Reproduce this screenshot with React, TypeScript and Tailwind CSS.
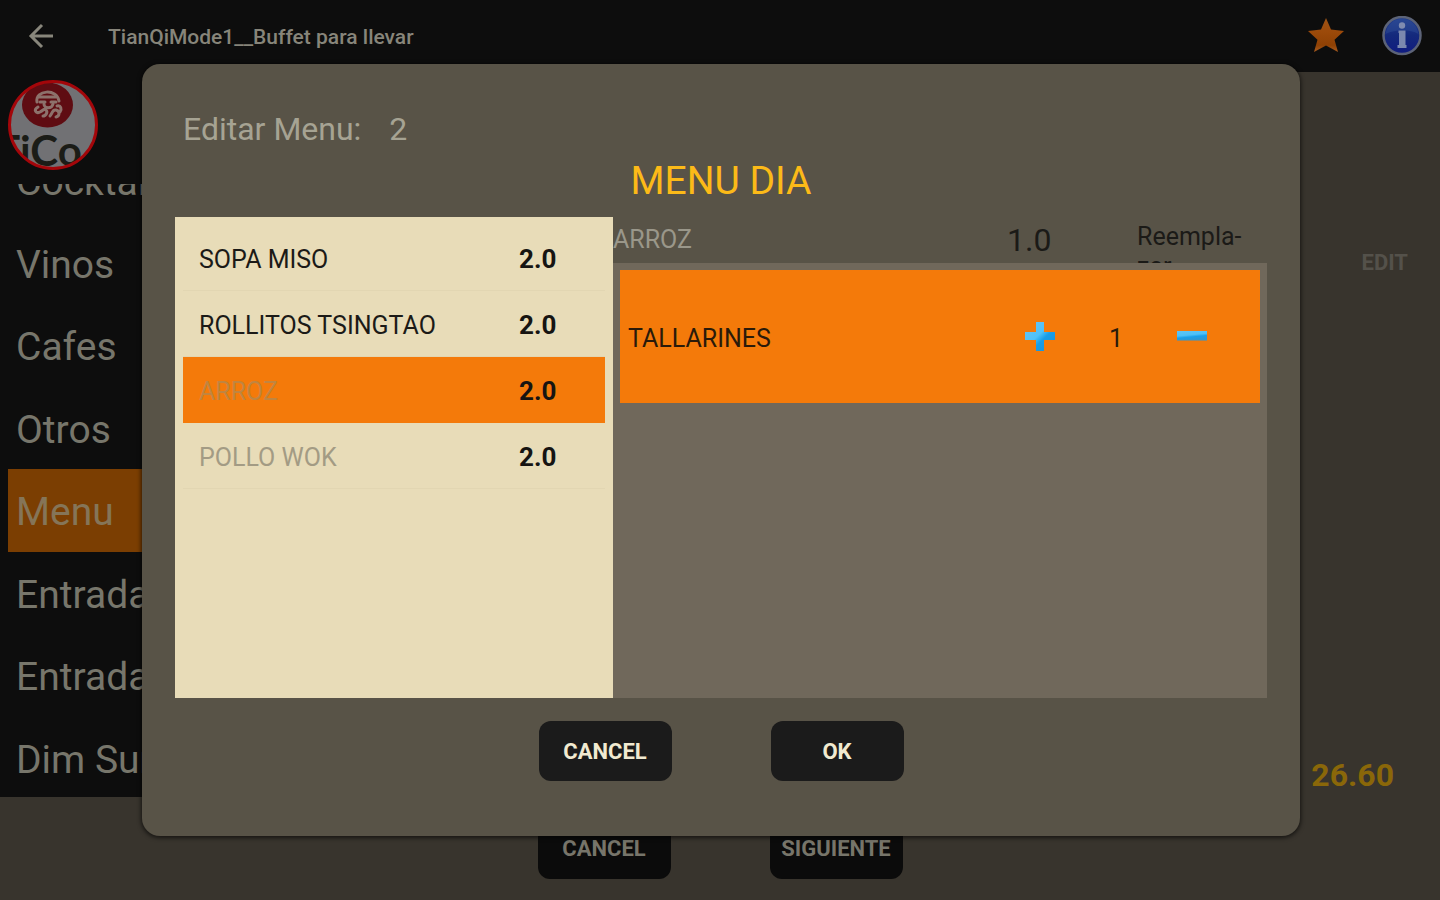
import { useState } from 'react';
import clsx from 'clsx';

type Dish = { name: string; qty: string; disabled?: boolean };

const CATEGORIES = ['Cocktails', 'Vinos', 'Cafes', 'Otros', 'Menu', 'Entradas', 'Entradas', 'Dim Sum'];

const DISHES: Dish[] = [
  { name: 'SOPA MISO', qty: '2.0' },
  { name: 'ROLLITOS TSINGTAO', qty: '2.0' },
  { name: 'ARROZ', qty: '2.0', disabled: true },
  { name: 'POLLO WOK', qty: '2.0', disabled: true },
];

function BackArrow() {
  return (
    <svg width="26" height="26" viewBox="0 0 26 26" fill="none" stroke="#88867b" strokeWidth="3">
      <path d="M25 13H3M14 2 3 13l11 11" />
    </svg>
  );
}

function StarIcon() {
  return (
    <svg width="38" height="38" viewBox="0 0 38 38">
      <defs>
        <linearGradient id="star" x1="0" y1="0" x2="0" y2="1">
          <stop offset="0" stopColor="#9c5316" />
          <stop offset="0.4" stopColor="#9c4a0a" />
          <stop offset="0.8" stopColor="#8f4104" />
          <stop offset="1" stopColor="#a85c20" />
        </linearGradient>
      </defs>
      <path d="M18 1l5 11.500L36 14l-9.500 8.800L30 35l-12-6.500L6 35l3.500-12.200L0 14l13-1.500z" fill="url(#star)" />
    </svg>
  );
}

function InfoIcon() {
  return (
    <svg width="40" height="40" viewBox="0 0 40 40">
      <defs>
        <linearGradient id="info" x1="0" y1="0" x2="0" y2="1">
          <stop offset="0" stopColor="#24418f" />
          <stop offset="0.5" stopColor="#14297c" />
          <stop offset="1" stopColor="#101b80" />
        </linearGradient>
      </defs>
      <circle cx="20" cy="19.500" r="18.500" fill="url(#info)" stroke="#5c6377" strokeWidth="2.500" />
      <path d="M3.500 18C5 9 11 3 20 3s15 6 16.500 15c-9-5-22-5-33 0z" fill="#35549c" opacity="0.4" />
      <circle cx="20" cy="9.500" r="3.200" fill="#7f8cb0" />
      <path d="M16.500 14.500h7V29h1v3h-9v-3H17V17h-.5z" fill="#7b88ae" />
    </svg>
  );
}

function BrandLogo() {
  return (
    <svg width="90" height="90" viewBox="0 0 90 90">
      <defs>
        <clipPath id="brand">
          <circle cx="45" cy="45" r="43" />
        </clipPath>
      </defs>
      <g clipPath="url(#brand)">
        <rect width="90" height="90" fill="#717174" />
        <ellipse cx="39.500" cy="25" rx="25.500" ry="22.500" fill="#5f0c12" />
        <g fill="none" stroke="#8d716b" strokeWidth="3" strokeLinecap="round">
          <path d="M29 22c-2-12 20-14 22-1" />
          <path d="M31 17h17M32 22h5M43 22h5" />
          <path d="M36 24c0 5 8 5 9 0" />
          <path d="M30 27c-5 3-2 7 2 5s4-4 6-2 0 6-3 6" />
          <path d="M42 36c3-3 2-7 6-6s4 6 0 7M49 26c4-1 5 3 3 6" />
        </g>
        <text x="-13" y="86" fontFamily="Lato, sans-serif" fontSize="42" fontWeight="700" fill="#1b1c17">TiCo</text>
      </g>
      <circle cx="45" cy="45" r="43.500" fill="none" stroke="#a3060a" strokeWidth="3" />
    </svg>
  );
}

function PlusIcon() {
  return (
    <svg width="30" height="30" viewBox="0 0 30 30">
      <defs>
        <linearGradient id="plus" x1="0" y1="0" x2="1" y2="1">
          <stop offset="0.150" stopColor="#63c3f5" />
          <stop offset="0.450" stopColor="#4fc2f8" />
          <stop offset="0.600" stopColor="#189ee8" />
          <stop offset="1" stopColor="#1d8fd2" />
        </linearGradient>
      </defs>
      <path d="M11 0h8v10h11v8H19v11h-8V18H0v-8h11z" fill="url(#plus)" />
    </svg>
  );
}

function MinusIcon() {
  return (
    <svg width="30" height="30" viewBox="0 0 30 30">
      <defs>
        <linearGradient id="minus" x1="0" y1="0" x2="0.300" y2="1">
          <stop offset="0.100" stopColor="#5bc4f5" />
          <stop offset="0.500" stopColor="#4cc0f7" />
          <stop offset="0.700" stopColor="#1a9fe8" />
          <stop offset="1" stopColor="#2f97d0" />
        </linearGradient>
      </defs>
      <path d="M0 9h30v9.500H0z" fill="url(#minus)" />
    </svg>
  );
}

function DialogButton({ label, dimmed }: { label: string; dimmed?: boolean }) {
  return (
    <button
      className={clsx(
        'h-[60px] w-[133px] rounded-xl text-[22px] font-bold',
        dimmed ? 'bg-[#0b0b0b] text-[#77756a]' : 'bg-[#1b1b1b] text-[#f1ead0]',
      )}
    >
      {label}
    </button>
  );
}

function Sidebar() {
  return (
    <nav className="flex w-[300px] flex-col bg-[#0d0d0d] pt-2 pl-2">
      <BrandLogo />
      <div className="mt-[14px] flex min-h-0 flex-1 flex-col justify-end overflow-hidden">
        <div className="-mb-0.5 grid h-[660px] shrink-0 grid-rows-8">
          {CATEGORIES.map((name, i) => (
            <button
              key={i}
              className={clsx(
                'px-2 pt-1 text-left text-[39px]',
                name === 'Menu' ? 'bg-[#7b3e02] text-[#857558]' : 'text-[#77766b]',
              )}
            >
              {name}
            </button>
          ))}
        </div>
      </div>
    </nav>
  );
}

function DishList({ selected, onSelect }: { selected: string; onSelect: (name: string) => void }) {
  return (
    <div className="w-[438px] shrink-0 bg-[#e8dcb8] p-2">
      {DISHES.map((dish) => (
        <button
          key={dish.name}
          onClick={() => onSelect(dish.name)}
          className={clsx(
            'flex h-[66px] w-full items-center border-b px-4 pt-1 text-left text-[25px]',
            dish.name === selected ? 'border-[#f47a0a] bg-[#f47a0a]' : 'border-[#e2d6b2]',
          )}
        >
          <span
            className={clsx(
              'flex-1',
              !dish.disabled && 'text-[#1b1a17]',
              dish.disabled && (dish.name === selected ? 'text-[#c08540]' : 'text-[#a39b84]'),
            )}
          >
            {dish.name}
          </span>
          <span className="w-[70px] text-[26px] font-bold text-[#161412]">{dish.qty}</span>
        </button>
      ))}
    </div>
  );
}

function ReplacementPanel({ dish }: { dish: string }) {
  const [count, setCount] = useState(1);

  return (
    <div className="flex flex-1 flex-col">
      <div className="flex h-[46px] overflow-hidden">
        <span className="flex-1 text-[25px] leading-[46px] text-[#9a978a]">{dish}</span>
        <span className="w-[130px] text-[32px] leading-[46px] text-[#1b1a17]">1.0</span>
        <span className="w-[130px] pt-[5px] text-[25px] leading-[30px] text-[#1b1a17]">
          Reempla-
          <br />
          zar
        </span>
      </div>
      <div className="flex-1 bg-[#70685b] p-[7px]">
        <div className="flex h-[133px] items-center bg-[#f47a0a] px-2 text-[25px] text-[#2a1a0a]">
          <span className="flex-1 pt-1">TALLARINES</span>
          <button aria-label="Añadir" onClick={() => setCount(count + 1)}>
            <PlusIcon />
          </button>
          <span className="w-[122px] pt-1 text-center">{count}</span>
          <button aria-label="Quitar" className="mr-[45px]" onClick={() => setCount(Math.max(0, count - 1))}>
            <MinusIcon />
          </button>
        </div>
      </div>
    </div>
  );
}

function EditMenuDialog() {
  const [selected, setSelected] = useState('ARROZ');

  return (
    <div className="absolute inset-0 flex items-center pr-[140px] pl-[142px]">
      <div
        role="dialog"
        aria-label="Editar Menu"
        className="flex-1 rounded-[18px] bg-[#585347] px-[33px] pt-[45px] pb-[55px] shadow-[0_1px_4px_1px_rgba(0,0,0,0.6)]"
      >
        <div className="flex gap-7 px-2 text-[32px] leading-10 text-[#a6a393]">
          <span>Editar Menu:</span>
          <span>2</span>
        </div>
        <h1 className="mt-2 text-center text-[39px] leading-12 text-[#fcba18]">MENU DIA</h1>
        <div className="mt-3 flex h-[481px]">
          <DishList selected={selected} onSelect={setSelected} />
          <ReplacementPanel dish={selected} />
        </div>
        <div className="mt-[23px] flex justify-center gap-[99px]">
          <DialogButton label="CANCEL" />
          <DialogButton label="OK" />
        </div>
      </div>
    </div>
  );
}

export default function App() {
  return (
    <div className="relative flex h-screen flex-col bg-[#38342d] font-['Roboto',sans-serif]">
      <header className="flex h-[72px] shrink-0 items-center bg-[#0d0d0d] pr-[18px] pl-7">
        <button aria-label="Volver">
          <BackArrow />
        </button>
        <span className="ml-[54px] flex-1 pt-1 text-[21px] font-medium text-[#87857a]">
          TianQiMode1__Buffet para llevar
        </span>
        <button aria-label="Favorito">
          <StarIcon />
        </button>
        <button aria-label="Información" className="ml-9">
          <InfoIcon />
        </button>
      </header>
      <div className="flex min-h-0 flex-1">
        <Sidebar />
        <main className="flex flex-1 flex-col items-end justify-between pt-[174px] pr-8">
          <button className="text-[22px] font-bold text-[#54514a]">EDIT</button>
          <span className="pr-[14px] text-[32px] leading-[44px] font-bold text-[#8a6709]">26.60</span>
        </main>
      </div>
      <footer className="flex h-[103px] shrink-0 items-center justify-center gap-[99px]">
        <DialogButton label="CANCEL" dimmed />
        <DialogButton label="SIGUIENTE" dimmed />
      </footer>
      <EditMenuDialog />
    </div>
  );
}
